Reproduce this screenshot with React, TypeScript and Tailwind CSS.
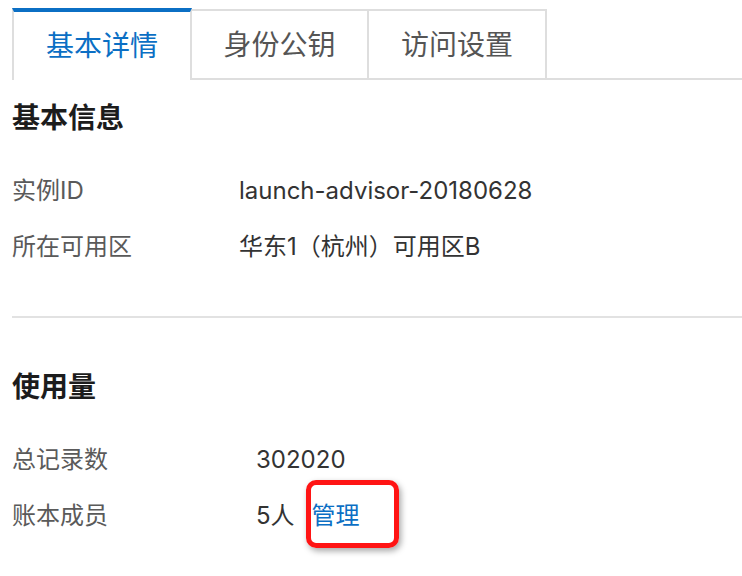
import React from "react";

const infoRows = [
  { label: "实例ID", value: "launch-advisor-20180628" },
  { label: "所在可用区", value: "华东1（杭州）可用区B" },
];

const tabs = ["基本详情", "身份公钥", "访问设置"];

const App = () => {
  return (
    <div className="relative w-[742px] h-[576px] overflow-hidden bg-white font-[family-name:Inter,Noto_Sans_CJK_SC,sans-serif]">
      {/* Tabs */}
      <div className="flex pt-2 pl-3 h-[80px]">
        {tabs.map((tab, index) =>
          index === 0 ? (
            <div
              key={tab}
              className="w-[180px] h-[72px] border-t-4 border-t-[#0b6fc4] border-x-2 border-x-[#dedede] bg-white flex items-center justify-center text-[28px] text-[#0b6fc4]"
            >
              {tab}
            </div>
          ) : (
            <div
              key={tab}
              className={`${
                index === 1 ? "w-[177px]" : "w-[178px]"
              } h-[71px] self-end border-t-2 border-r-2 border-b-2 border-[#dedede] flex items-center justify-center text-[28px] text-[#555]`}
            >
              {tab}
            </div>
          )
        )}
        <div className="flex-1 border-b-2 border-[#dedede]"></div>
      </div>

      {/* Basic info */}
      <div className="pl-3">
        <h2 className="mt-[18px] h-[40px] leading-[40px] text-[28px] font-semibold text-[#1c1c1c]">
          基本信息
        </h2>
        <div className="mt-[25px]">
          {infoRows.map((row) => (
            <div key={row.label} className="flex h-[56px] items-center text-[24px]">
              <span className="w-[227px] text-[#5a5a5a]">{row.label}</span>
              <span className="text-[#333]">{row.value}</span>
            </div>
          ))}
        </div>
      </div>

      <div className="ml-3 mt-[41px] h-[2px] bg-[#e2e2e2]"></div>

      {/* Usage */}
      <div className="pl-3">
        <h2 className="mt-[49px] h-[40px] leading-[40px] text-[28px] font-semibold text-[#1c1c1c]">
          使用量
        </h2>
        <div className="mt-[25px]">
          <div className="flex h-[56px] items-center text-[24px]">
            <span className="w-[244px] text-[#5a5a5a]">总记录数</span>
            <span className="text-[#333]">302020</span>
          </div>
          <div className="flex h-[56px] items-center text-[24px]">
            <span className="w-[244px] text-[#5a5a5a]">账本成员</span>
            <span className="text-[#333]">5人</span>
            <span className="relative ml-[17px] leading-[56px] text-[#0b6fc4]">
              管理
              <span className="absolute -left-[6px] -top-[8px] w-[93px] h-[68px] rounded-[10px] border-[5px] border-[#ff1414] shadow-[2px_3px_6px_rgba(0,0,0,0.35)]"></span>
            </span>
          </div>
        </div>
      </div>
    </div>
  );
};

export default App;
